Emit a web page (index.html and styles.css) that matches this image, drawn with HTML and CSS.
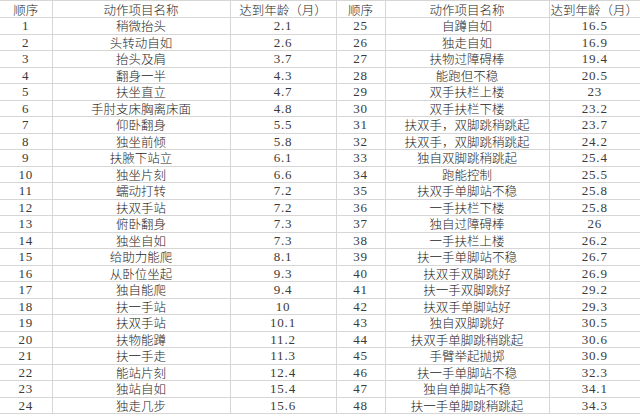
FILE: index.html
```html
<!DOCTYPE html>
<html lang="zh-CN">
<head>
<meta charset="utf-8">
<title>婴幼儿动作发育表</title>
<link rel="stylesheet" href="styles.css">
</head>
<body>
<table class="sheet">
<colgroup>
<col class="c-seq1"><col class="c-name1"><col class="c-age1">
<col class="c-seq2"><col class="c-name2"><col class="c-age2">
</colgroup>
<thead>
<tr><th>顺序</th><th>动作项目名称</th><th>达到年龄（月）</th><th>顺序</th><th>动作项目名称</th><th class="left">达到年龄（月）</th></tr>
</thead>
<tbody>
<tr><td class="num">1</td><td>稍微抬头</td><td class="num">2.1</td><td class="num">25</td><td>自蹲自如</td><td class="num">16.5</td></tr>
<tr><td class="num">2</td><td>头转动自如</td><td class="num">2.6</td><td class="num">26</td><td>独走自如</td><td class="num">16.9</td></tr>
<tr><td class="num">3</td><td>抬头及肩</td><td class="num">3.7</td><td class="num">27</td><td>扶物过障碍棒</td><td class="num">19.4</td></tr>
<tr><td class="num">4</td><td>翻身一半</td><td class="num">4.3</td><td class="num">28</td><td>能跑但不稳</td><td class="num">20.5</td></tr>
<tr><td class="num">5</td><td>扶坐直立</td><td class="num">4.7</td><td class="num">29</td><td>双手扶栏上楼</td><td class="num">23</td></tr>
<tr><td class="num">6</td><td>手肘支床胸离床面</td><td class="num">4.8</td><td class="num">30</td><td>双手扶栏下楼</td><td class="num">23.2</td></tr>
<tr><td class="num">7</td><td>仰卧翻身</td><td class="num">5.5</td><td class="num">31</td><td>扶双手，双脚跳稍跳起</td><td class="num">23.7</td></tr>
<tr><td class="num">8</td><td>独坐前倾</td><td class="num">5.8</td><td class="num">32</td><td>扶双手，双脚跳稍跳起</td><td class="num">24.2</td></tr>
<tr><td class="num">9</td><td>扶腋下站立</td><td class="num">6.1</td><td class="num">33</td><td>独自双脚跳稍跳起</td><td class="num">25.4</td></tr>
<tr><td class="num">10</td><td>独坐片刻</td><td class="num">6.6</td><td class="num">34</td><td>跑能控制</td><td class="num">25.5</td></tr>
<tr><td class="num">11</td><td>蠕动打转</td><td class="num">7.2</td><td class="num">35</td><td>扶双手单脚站不稳</td><td class="num">25.8</td></tr>
<tr><td class="num">12</td><td>扶双手站</td><td class="num">7.2</td><td class="num">36</td><td>一手扶栏下楼</td><td class="num">25.8</td></tr>
<tr><td class="num">13</td><td>俯卧翻身</td><td class="num">7.3</td><td class="num">37</td><td>独自过障碍棒</td><td class="num">26</td></tr>
<tr><td class="num">14</td><td>独坐自如</td><td class="num">7.3</td><td class="num">38</td><td>一手扶栏上楼</td><td class="num">26.2</td></tr>
<tr><td class="num">15</td><td>给助力能爬</td><td class="num">8.1</td><td class="num">39</td><td>扶一手单脚站不稳</td><td class="num">26.7</td></tr>
<tr><td class="num">16</td><td>从卧位坐起</td><td class="num">9.3</td><td class="num">40</td><td>扶双手双脚跳好</td><td class="num">26.9</td></tr>
<tr><td class="num">17</td><td>独自能爬</td><td class="num">9.4</td><td class="num">41</td><td>扶一手双脚跳好</td><td class="num">29.2</td></tr>
<tr><td class="num">18</td><td>扶一手站</td><td class="num">10</td><td class="num">42</td><td>扶双手单脚站好</td><td class="num">29.3</td></tr>
<tr><td class="num">19</td><td>扶双手站</td><td class="num">10.1</td><td class="num">43</td><td>独自双脚跳好</td><td class="num">30.5</td></tr>
<tr><td class="num">20</td><td>扶物能蹲</td><td class="num">11.2</td><td class="num">44</td><td>扶双手单脚跳稍跳起</td><td class="num">30.6</td></tr>
<tr><td class="num">21</td><td>扶一手走</td><td class="num">11.3</td><td class="num">45</td><td>手臂举起抛掷</td><td class="num">30.9</td></tr>
<tr><td class="num">22</td><td>能站片刻</td><td class="num">12.4</td><td class="num">46</td><td>扶一手单脚站不稳</td><td class="num">32.3</td></tr>
<tr><td class="num">23</td><td>独站自如</td><td class="num">15.4</td><td class="num">47</td><td>独自单脚站不稳</td><td class="num">34.1</td></tr>
<tr><td class="num">24</td><td>独走几步</td><td class="num">15.6</td><td class="num">48</td><td>扶一手单脚跳稍跳起</td><td class="num">34.3</td></tr>
</tbody>
</table>
</body>
</html>
```
FILE: styles.css
```css
html, body {
  margin: 0;
  padding: 0;
  background: #ffffff;
}
body {
  width: 640px;
  height: 416px;
  overflow: hidden;
}
.sheet {
  table-layout: fixed;
  border-collapse: collapse;
  width: 640px;
  font-family: "Noto Sans CJK SC", "Liberation Serif", serif;
  font-size: 12.5px;
  font-weight: 300;
  color: #262626;
}
.c-seq1 { width: 52px; }
.c-name1 { width: 178px; }
.c-age1 { width: 106px; }
.c-seq2 { width: 49px; }
.c-name2 { width: 164px; }
.c-age2 { width: 91px; }
.sheet th,
.sheet td {
  padding: 0;
  height: 15.5px;
  line-height: 15px;
  text-align: center;
  vertical-align: middle;
  white-space: nowrap;
  overflow: visible;
  border: 1px solid #d6d6d6;
  font-weight: 300;
}
.sheet th {
  height: 16px;
}
.sheet th.left {
  text-align: left;
  padding-left: 1px;
}
.sheet tr > :first-child { border-left: none; }
.sheet tr > :last-child { border-right: none; }
.sheet .num {
  font-family: "Liberation Serif", serif;
  font-weight: 400;
  font-size: 13px;
  letter-spacing: 0.8px;
  color: #3a3a3a;
}
```
